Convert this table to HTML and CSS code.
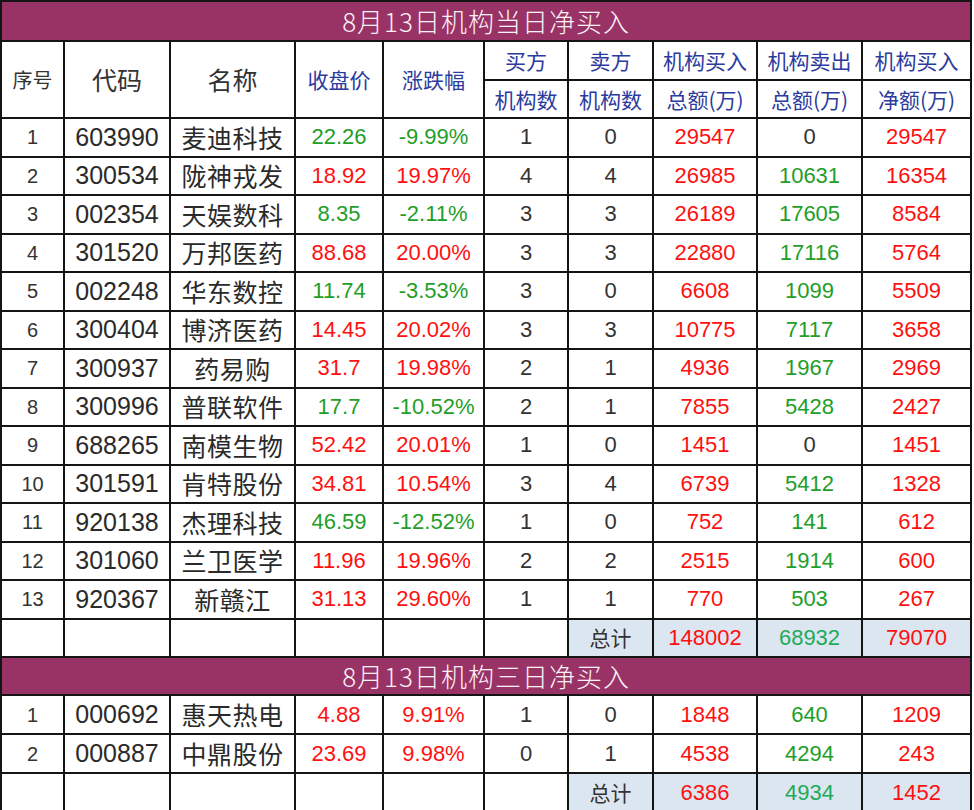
FILE: index.html
```html
<!DOCTYPE html>
<html lang="zh-CN">
<head>
<meta charset="utf-8">
<title>8月13日机构净买入</title>
<link rel="stylesheet" href="styles.css">
</head>
<body>
<table class="sheet">
  <colgroup>
    <col class="c-seq"><col class="c-code"><col class="c-name"><col class="c-price"><col class="c-pct">
    <col class="c-cnt"><col class="c-cnt2"><col class="c-amt"><col class="c-amt2"><col class="c-net">
  </colgroup>
  <tbody>
    <tr class="r-title"><td colspan="10" class="title">8月13日机构当日净买入</td></tr>
    <tr class="r-head1">
      <td rowspan="2" class="hd hd-seq">序号</td>
      <td rowspan="2" class="hd hd-big">代码</td>
      <td rowspan="2" class="hd hd-big">名称</td>
      <td rowspan="2" class="hd hd-blue">收盘价</td>
      <td rowspan="2" class="hd hd-blue">涨跌幅</td>
      <td class="hd hd-blue">买方</td>
      <td class="hd hd-blue">卖方</td>
      <td class="hd hd-blue">机构买入</td>
      <td class="hd hd-blue">机构卖出</td>
      <td class="hd hd-blue">机构买入</td>
    </tr>
    <tr class="r-head2">
      <td class="hd hd-blue">机构数</td>
      <td class="hd hd-blue">机构数</td>
      <td class="hd hd-blue">总额(万)</td>
      <td class="hd hd-blue">总额(万)</td>
      <td class="hd hd-blue">净额(万)</td>
    </tr>
    <tr class="row"><td class="seq">1</td><td class="code">603990</td><td class="name">麦迪科技</td><td class="num dn">22.26</td><td class="num dn">-9.99%</td><td class="num cnt">1</td><td class="num cnt">0</td><td class="num up">29547</td><td class="num cnt">0</td><td class="num up">29547</td></tr>
    <tr class="row"><td class="seq">2</td><td class="code">300534</td><td class="name">陇神戎发</td><td class="num up">18.92</td><td class="num up">19.97%</td><td class="num cnt">4</td><td class="num cnt">4</td><td class="num up">26985</td><td class="num dn">10631</td><td class="num up">16354</td></tr>
    <tr class="row"><td class="seq">3</td><td class="code">002354</td><td class="name">天娱数科</td><td class="num dn">8.35</td><td class="num dn">-2.11%</td><td class="num cnt">3</td><td class="num cnt">3</td><td class="num up">26189</td><td class="num dn">17605</td><td class="num up">8584</td></tr>
    <tr class="row"><td class="seq">4</td><td class="code">301520</td><td class="name">万邦医药</td><td class="num up">88.68</td><td class="num up">20.00%</td><td class="num cnt">3</td><td class="num cnt">3</td><td class="num up">22880</td><td class="num dn">17116</td><td class="num up">5764</td></tr>
    <tr class="row"><td class="seq">5</td><td class="code">002248</td><td class="name">华东数控</td><td class="num dn">11.74</td><td class="num dn">-3.53%</td><td class="num cnt">3</td><td class="num cnt">0</td><td class="num up">6608</td><td class="num dn">1099</td><td class="num up">5509</td></tr>
    <tr class="row"><td class="seq">6</td><td class="code">300404</td><td class="name">博济医药</td><td class="num up">14.45</td><td class="num up">20.02%</td><td class="num cnt">3</td><td class="num cnt">3</td><td class="num up">10775</td><td class="num dn">7117</td><td class="num up">3658</td></tr>
    <tr class="row"><td class="seq">7</td><td class="code">300937</td><td class="name">药易购</td><td class="num up">31.7</td><td class="num up">19.98%</td><td class="num cnt">2</td><td class="num cnt">1</td><td class="num up">4936</td><td class="num dn">1967</td><td class="num up">2969</td></tr>
    <tr class="row"><td class="seq">8</td><td class="code">300996</td><td class="name">普联软件</td><td class="num dn">17.7</td><td class="num dn">-10.52%</td><td class="num cnt">2</td><td class="num cnt">1</td><td class="num up">7855</td><td class="num dn">5428</td><td class="num up">2427</td></tr>
    <tr class="row"><td class="seq">9</td><td class="code">688265</td><td class="name">南模生物</td><td class="num up">52.42</td><td class="num up">20.01%</td><td class="num cnt">1</td><td class="num cnt">0</td><td class="num up">1451</td><td class="num cnt">0</td><td class="num up">1451</td></tr>
    <tr class="row"><td class="seq">10</td><td class="code">301591</td><td class="name">肯特股份</td><td class="num up">34.81</td><td class="num up">10.54%</td><td class="num cnt">3</td><td class="num cnt">4</td><td class="num up">6739</td><td class="num dn">5412</td><td class="num up">1328</td></tr>
    <tr class="row"><td class="seq">11</td><td class="code">920138</td><td class="name">杰理科技</td><td class="num dn">46.59</td><td class="num dn">-12.52%</td><td class="num cnt">1</td><td class="num cnt">0</td><td class="num up">752</td><td class="num dn">141</td><td class="num up">612</td></tr>
    <tr class="row"><td class="seq">12</td><td class="code">301060</td><td class="name">兰卫医学</td><td class="num up">11.96</td><td class="num up">19.96%</td><td class="num cnt">2</td><td class="num cnt">2</td><td class="num up">2515</td><td class="num dn">1914</td><td class="num up">600</td></tr>
    <tr class="row"><td class="seq">13</td><td class="code">920367</td><td class="name">新赣江</td><td class="num up">31.13</td><td class="num up">29.60%</td><td class="num cnt">1</td><td class="num cnt">1</td><td class="num up">770</td><td class="num dn">503</td><td class="num up">267</td></tr>
    <tr class="row total"><td></td><td></td><td></td><td></td><td></td><td></td><td class="sum label">总计</td><td class="sum num up">148002</td><td class="sum num dn2">68932</td><td class="sum num up">79070</td></tr>
    <tr class="r-title2"><td colspan="10" class="title">8月13日机构三日净买入</td></tr>
    <tr class="row row2"><td class="seq">1</td><td class="code">000692</td><td class="name">惠天热电</td><td class="num up">4.88</td><td class="num up">9.91%</td><td class="num cnt">1</td><td class="num cnt">0</td><td class="num up">1848</td><td class="num dn">640</td><td class="num up">1209</td></tr>
    <tr class="row row2"><td class="seq">2</td><td class="code">000887</td><td class="name">中鼎股份</td><td class="num up">23.69</td><td class="num up">9.98%</td><td class="num cnt">0</td><td class="num cnt">1</td><td class="num up">4538</td><td class="num dn">4294</td><td class="num up">243</td></tr>
    <tr class="row row2 total"><td></td><td></td><td></td><td></td><td></td><td></td><td class="sum label">总计</td><td class="sum num up">6386</td><td class="sum num dn2">4934</td><td class="sum num up">1452</td></tr>
  </tbody>
</table>
</body>
</html>
```
FILE: styles.css
```css
html, body {
  margin: 0;
  padding: 0;
  background: #ffffff;
}
body {
  overflow: hidden;
  font-family: "Liberation Sans", "Noto Sans CJK SC", sans-serif;
  color: #2a2a2a;
}
.sheet {
  border-collapse: collapse;
  table-layout: fixed;
  width: 972px;
}
.sheet td {
  border: 2px solid #141414;
  padding: 0;
  text-align: center;
  vertical-align: middle;
  white-space: nowrap;
  overflow: hidden;
  line-height: 1;
}
.c-seq { width: 63px; }
.c-code { width: 106px; }
.c-name { width: 125px; }
.c-price { width: 88px; }
.c-pct { width: 101px; }
.c-cnt { width: 84px; }
.c-cnt2 { width: 85px; }
.c-amt { width: 104px; }
.c-amt2 { width: 105px; }
.c-net { width: 109px; }

.r-title { height: 40px; }
.r-head1 { height: 39px; }
.r-head2 { height: 38px; }
.row { height: 38.5px; }
.r-title2 { height: 38px; }
.row2 { height: 39px; }

.title {
  background: #993366;
  color: #fbf2f7;
  font-family: "Noto Sans CJK SC", sans-serif;
  font-weight: 300;
  font-size: 26px;
  letter-spacing: 1px;
  padding-left: 4px;
}
.hd {
  font-family: "Noto Sans CJK SC", sans-serif;
  font-size: 21px;
}
.hd-seq {
  color: #333333;
  font-size: 20px;
}
.hd-big {
  color: #333333;
  font-size: 25px;
}
.hd-blue {
  color: #2b3b9e;
}
.seq {
  font-size: 20px;
  color: #333333;
}
.code {
  font-size: 25px;
  color: #2a2a2a;
}
.name {
  font-family: "Noto Sans CJK SC", sans-serif;
  font-size: 25px;
  letter-spacing: 0.5px;
  color: #2a2a2a;
}
.num {
  font-size: 22px;
}
.cnt {
  color: #333333;
}
.up {
  color: #ff1010;
}
.dn {
  color: #1f9e28;
}
.dn2 {
  color: #22aa5a;
}
.sum {
  background: #dce6f1;
}
.label {
  font-family: "Noto Sans CJK SC", sans-serif;
  font-size: 21px;
  color: #333333;
}
```
